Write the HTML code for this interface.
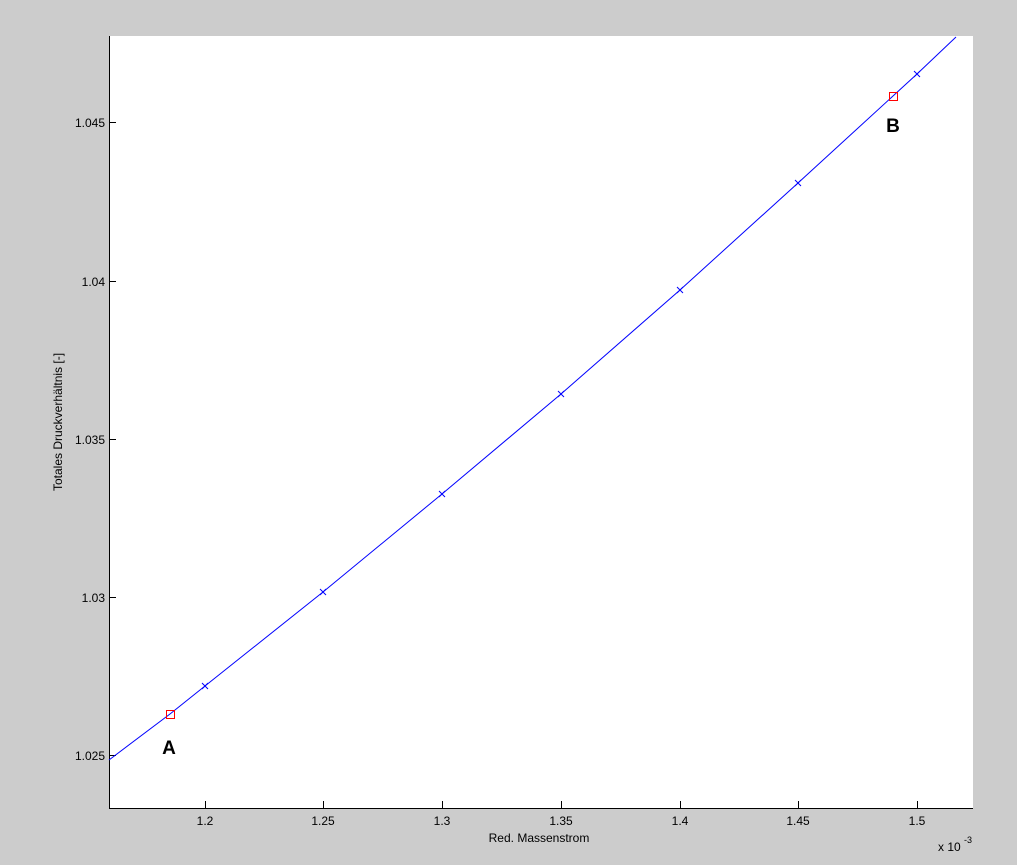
<!DOCTYPE html>
<html><head><style>
html,body{margin:0;padding:0;background:#cccccc;width:1017px;height:865px;overflow:hidden}
svg{display:block}
text{font-family:"Liberation Sans",Arial,sans-serif;font-size:12px;fill:#000}
</style></head><body>
<svg width="1017" height="865" viewBox="0 0 1017 865">
<rect x="0" y="0" width="1017" height="865" fill="#cccccc"/>
<rect x="109" y="36" width="864" height="772" fill="#ffffff"/>
<line x1="109.5" y1="36" x2="109.5" y2="808.5" stroke="#000" stroke-width="1"/>
<line x1="109" y1="808.5" x2="973" y2="808.5" stroke="#000" stroke-width="1"/>
<g stroke="#000" stroke-width="1">
<line x1="205.5" y1="808" x2="205.5" y2="801"/>
<line x1="323.5" y1="808" x2="323.5" y2="801"/>
<line x1="442.5" y1="808" x2="442.5" y2="801"/>
<line x1="561.5" y1="808" x2="561.5" y2="801"/>
<line x1="680.5" y1="808" x2="680.5" y2="801"/>
<line x1="798.5" y1="808" x2="798.5" y2="801"/>
<line x1="917.5" y1="808" x2="917.5" y2="801"/>
<line x1="109" y1="755.5" x2="116" y2="755.5"/>
<line x1="109" y1="597.5" x2="116" y2="597.5"/>
<line x1="109" y1="439.5" x2="116" y2="439.5"/>
<line x1="109" y1="281.5" x2="116" y2="281.5"/>
<line x1="109" y1="122.5" x2="116" y2="122.5"/>
</g>
<g text-anchor="middle">
<text x="205" y="825">1.2</text>
<text x="323" y="825">1.25</text>
<text x="442" y="825">1.3</text>
<text x="561" y="825">1.35</text>
<text x="680" y="825">1.4</text>
<text x="798" y="825">1.45</text>
<text x="917" y="825">1.5</text>
<text x="539" y="842">Red. Massenstrom</text>
</g>
<text x="938" y="851">x 10</text><text x="964" y="843" style="font-size:9px">-3</text>
<g text-anchor="end">
<text x="105" y="760">1.025</text>
<text x="105" y="602">1.03</text>
<text x="105" y="444">1.035</text>
<text x="105" y="286">1.04</text>
<text x="105" y="127">1.045</text>
</g>
<text transform="translate(62,422) rotate(-90)" text-anchor="middle">Totales Druckverhältnis [-]</text>
<polyline fill="none" stroke="#0000ff" stroke-width="1" points="109,760 170,714 205,686 323,592 442,494 561,394 680,290 798,183 893,96 917,74 956,37"/>
<g stroke="#0000ff" stroke-width="1">
<path d="M202,683l6,6M208,683l-6,6M320,589l6,6M326,589l-6,6M439,491l6,6M445,491l-6,6M558,391l6,6M564,391l-6,6M677,287l6,6M683,287l-6,6M795,180l6,6M801,180l-6,6M914,71l6,6M920,71l-6,6"/>
</g>
<rect x="166.5" y="710.5" width="8" height="8" fill="none" stroke="#ff0000"/>
<rect x="889.5" y="92.5" width="8" height="8" fill="none" stroke="#ff0000"/>
<text x="169" y="754" text-anchor="middle" style="font-size:19px;font-weight:bold">A</text>
<text x="893" y="132" text-anchor="middle" style="font-size:19px;font-weight:bold">B</text>
</svg>
</body></html>
